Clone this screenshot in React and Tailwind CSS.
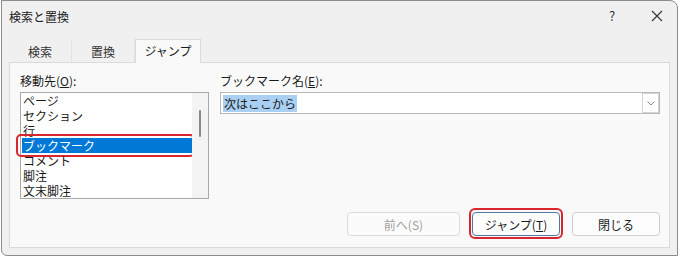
import React, { useState } from "react";

const items = ["ページ", "セクション", "行", "ブックマーク", "コメント", "脚注", "文末脚注"];
const tabs = ["検索", "置換", "ジャンプ"];

function App() {
  const [selected, setSelected] = useState(3);
  const [tab, setTab] = useState(2);

  return (
    <div
      className="w-[680px] h-[257px] bg-white text-[12px] text-[#1b1b1b] leading-[15px]"
      style={{ fontFamily: '"Noto Sans CJK JP", "Noto Sans", sans-serif' }}
    >
      <div className="ml-[1px] w-[677px] h-[256px] bg-[#f0f0f0] border border-[#8c8c8c] rounded-tr-[8px] rounded-bl-[6px] flex flex-col">
        {/* title bar */}
        <div className="h-[29px] flex items-center pl-[7px] pr-[14px]">
          <span className="flex-1 pt-[1px]">検索と置換</span>
          <span className="w-[12px] text-center text-[13px] text-[#333] mr-[33px]">?</span>
          <svg width="12" height="12" viewBox="0 0 12 12" className="text-[#333]">
            <path d="M1 1 L11 11 M11 1 L1 11" stroke="currentColor" strokeWidth="1.1" />
          </svg>
        </div>

        {/* tabs */}
        <div className="h-[32px] flex items-end pl-[7px]">
          {tabs.map((t, i) =>
            i === tab ? (
              <div
                key={t}
                onClick={() => setTab(i)}
                className="w-[66px] h-[24px] -mb-[1px] relative z-10 bg-[#f9f9f9] border border-b-0 border-[#dadada] flex items-center justify-center pb-[2px]"
              >
                {t}
              </div>
            ) : (
              <div
                key={t}
                onClick={() => setTab(i)}
                className="w-[63px] h-[22px] border-r border-[#e3e3e3] flex items-center justify-center text-[#333]"
              >
                {t}
              </div>
            )
          )}
        </div>

        {/* panel */}
        <div className="ml-[7px] mr-[7px] h-[186px] bg-[#f9f9f9] border border-[#dadada] flex flex-col pl-[10px] pr-[9px] pt-[10px]">
          <div className="flex gap-[11px]">
            <div className="w-[189px] flex flex-col">
              <div className="h-[16px] mb-[3px]">
                移動先(<span className="underline">O</span>):
              </div>
              <div className="h-[107px] bg-white border border-[#a8a8a8] flex">
                <div className="flex-1 flex flex-col pl-[1px]">
                  {items.map((it, i) => (
                    <div
                      key={it}
                      onClick={() => setSelected(i)}
                      className={`relative h-[15px] pl-[1px] whitespace-nowrap ${
                        selected === i ? "bg-[#0078d7] text-white" : ""
                      }`}
                    >
                      {it}
                      {selected === i && (
                        <div className="absolute -left-[6px] -right-[3px] -top-[4px] -bottom-[4px] border-2 border-[#d7262e] rounded-[5px]" />
                      )}
                    </div>
                  ))}
                </div>
                <div className="w-[16px] bg-[#f3f3f3] relative">
                  <div className="absolute left-[7px] top-[17px] w-[2px] h-[27px] bg-[#8a8a8a] rounded-full" />
                </div>
              </div>
            </div>

            <div className="flex-1 flex flex-col">
              <div className="h-[16px] mb-[3px]">
                ブックマーク名(<span className="underline">E</span>):
              </div>
              <div className="h-[22px] bg-white border border-[#b8b8b8] flex items-center pl-[2px]">
                <span className="bg-[#a9d0f3] px-[1px] leading-[17px] text-[#1b1b1b]">次はここから</span>
                <div className="flex-1" />
                <div className="w-[17px] h-[20px] border border-[#d4d4d4] flex items-center justify-center mr-[0px]">
                  <svg width="8" height="5" viewBox="0 0 8 5">
                    <path d="M0.5 0.5 L4 4 L7.5 0.5" fill="none" stroke="#8a8a8a" strokeWidth="1" />
                  </svg>
                </div>
              </div>
            </div>
          </div>

          <div className="mt-auto mb-[11px] flex justify-end gap-[12px]">
            <div className="w-[113px] h-[24px] bg-[#fbfbfb] border border-[#dcdcdc] rounded-[4px] flex items-center justify-center text-[#a0a0a0]">
              前へ(S)
            </div>
            <div className="relative w-[88px] h-[24px] bg-[#fdfdfd] border border-[#4f7aa3] rounded-[4px] flex items-center justify-center">
              ジャンプ(<span className="underline">T</span>)
              <div className="absolute -left-[4px] -right-[4px] -top-[5px] -bottom-[4px] border-2 border-[#d7262e] rounded-[6px]" />
            </div>
            <div className="w-[88px] h-[24px] bg-[#fdfdfd] border border-[#d0d0d0] rounded-[4px] flex items-center justify-center">
              閉じる
            </div>
          </div>
        </div>
      </div>
    </div>
  );
}

export default App;
